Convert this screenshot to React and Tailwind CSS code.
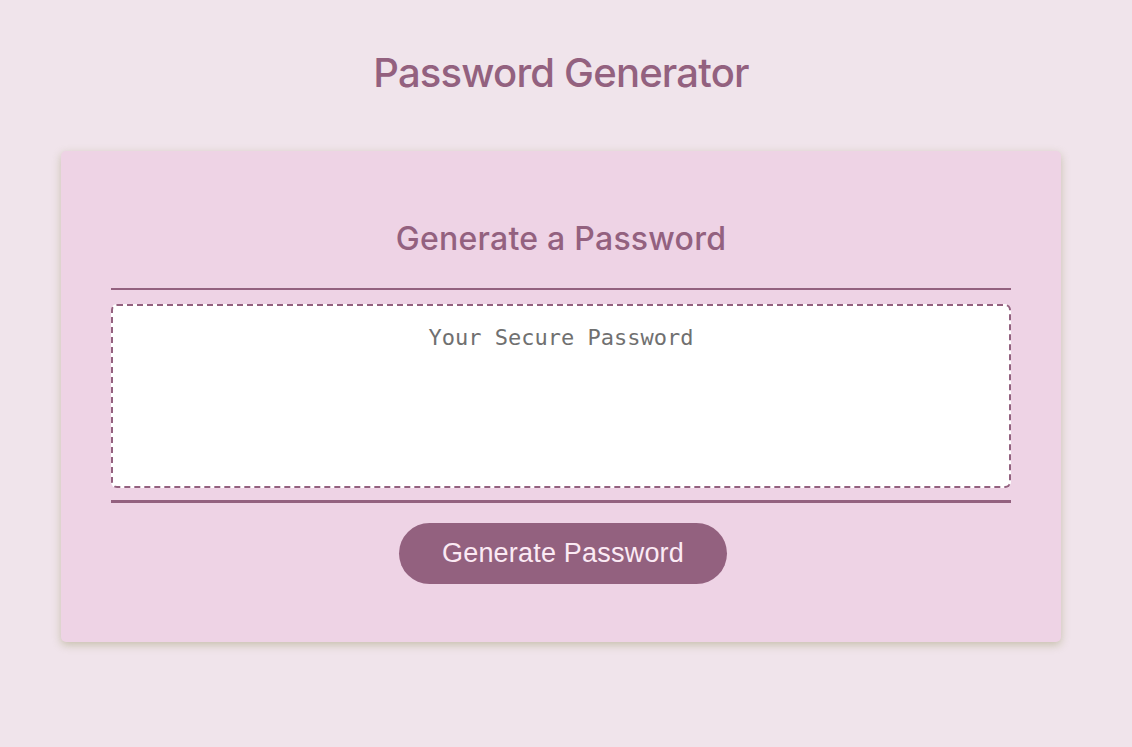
import React from 'react';

export default function App() {
  return (
    <div className="min-h-[747px] bg-[#f0e4eb] pt-[49px] font-['Inter',sans-serif]">
      <div className="w-[1122px]">
        <h1 className="text-center text-[40px] font-medium leading-[48px] text-[#93617f] tracking-[-0.8px]">
          Password Generator
        </h1>

        <div className="mt-[54px] ml-[61px] w-[1000px] rounded-[5px] bg-[#eed3e5] px-[50px] pt-[69px] pb-[58px] shadow-[0_3px_9px_rgba(150,150,100,0.45)]">
          <div className="border-b-2 border-[#93617f] pb-[30px]">
            <h2 className="text-center text-[32px] font-medium leading-[38px] text-[#93617f] tracking-[0.25px]">
              Generate a Password
            </h2>
          </div>

          <div className="pt-[14px] pb-[12px]">
            <textarea
              readOnly
              placeholder="Your Secure Password"
              className="block h-[184px] w-full resize-none rounded-[6px] border-2 border-dashed border-[#93617f] bg-white px-4 pt-[19px] text-center font-['DejaVu_Sans_Mono',monospace] text-[22px] leading-[26px] text-[#555] placeholder:text-[#707070] outline-none"
            />
          </div>

          <div className="flex justify-center border-t-[3px] border-[#93617f] pt-[20px]">
            <button className="ml-[4px] h-[61px] w-[328px] rounded-full bg-[#93617f] font-['Liberation_Sans',sans-serif] text-[27px] tracking-[0.2px] text-[#fbeaf4]">
              Generate Password
            </button>
          </div>
        </div>
      </div>
    </div>
  );
}
